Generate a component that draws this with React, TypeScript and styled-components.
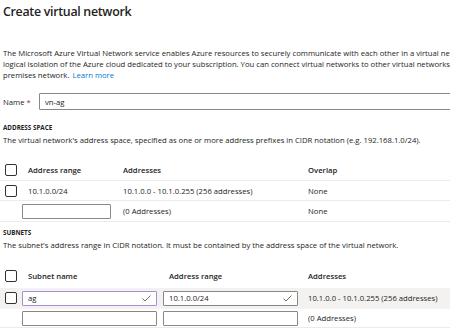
import React from 'react';
import styled, { createGlobalStyle } from 'styled-components';

const GlobalStyle = createGlobalStyle`
  html, body {
    margin: 0;
    padding: 0;
    overflow: hidden;
    background: #ffffff;
  }
  body {
    font-family: "Open Sans", "Liberation Sans", sans-serif;
    color: #252423;
  }
`;

const Page = styled.div`
  width: 620px;
  padding: 0 0 0 3px;
`;

const Title = styled.h1`
  margin: 0;
  padding-top: 2px;
  height: 35px;
  font-size: 12.4px;
  font-weight: 600;
  line-height: 20px;
  letter-spacing: -0.3px;
`;

const Description = styled.p`
  margin: 0;
  padding-top: 11px;
  font-size: 7.7px;
  line-height: 11px;
  white-space: nowrap;
`;

const Link = styled.a`
  color: #0078d4;
  text-decoration: none;
  margin-left: 3px;
`;

const FieldRow = styled.div`
  display: flex;
  align-items: center;
  margin-top: 12px;
`;

const FieldLabel = styled.label`
  width: 36px;
  font-size: 7.7px;
`;

const Required = styled.span`
  color: #a4262c;
  margin-left: 2px;
`;

const TextBox = styled.div<{ $width: number; $active?: boolean }>`
  box-sizing: border-box;
  width: ${(p) => p.$width}px;
  height: 15px;
  border: 1px solid ${(p) => (p.$active ? '#a58fd1' : '#8a8886')};
  border-radius: 1px;
  background: #ffffff;
  display: flex;
  align-items: center;
  justify-content: space-between;
  padding: 0 5px;
  font-size: 7.7px;
`;

const NameBox = styled(TextBox)`
  height: 17px;
`;

const SectionTitle = styled.h2<{ $gap?: number }>`
  margin: ${(p) => p.$gap ?? 13}px 0 0;
  font-size: 6.3px;
  font-weight: 700;
  line-height: 10px;
`;

const SectionText = styled.p`
  margin: 2px 0 0;
  font-size: 7.7px;
  line-height: 11px;
  white-space: nowrap;
`;

const Table = styled.div<{ $cols: string }>`
  display: grid;
  grid-template-columns: ${(p) => p.$cols};
  margin: 13px 0 0 -3px;
`;

const Row = styled.div<{ $height: number; $shaded?: boolean; $line?: boolean }>`
  display: contents;
  & > * {
    height: ${(p) => p.$height}px;
    background: ${(p) => (p.$shaded ? '#f3f2f1' : 'transparent')};
    border-bottom: ${(p) => (p.$line ? '1px solid #edebe9' : '1px solid transparent')};
  }
`;

const Cell = styled.div<{ $head?: boolean; $pad?: number }>`
  display: flex;
  align-items: center;
  padding-left: ${(p) => p.$pad ?? 6}px;
  font-size: 7.7px;
  font-weight: ${(p) => (p.$head ? 600 : 400)};
  white-space: nowrap;
`;

const CheckCell = styled.div`
  display: flex;
  align-items: center;
  padding-left: 5px;
`;

const Checkbox = styled.span`
  box-sizing: border-box;
  width: 12px;
  height: 12px;
  border: 1px solid #323130;
  border-radius: 2px;
  background: #ffffff;
`;

const Check = () => (
  <svg width="9" height="7" viewBox="0 0 9 7">
    <polyline points="0.5,3.5 3,6 8.5,0.5" fill="none" stroke="#605e5c" strokeWidth="0.9" />
  </svg>
);

export default function App() {
  return (
    <Page>
      <GlobalStyle />
      <Title>Create virtual network</Title>
      <Description>
        The Microsoft Azure Virtual Network service enables Azure resources to securely communicate with each other in a virtual network which is a
        <br />
        logical isolation of the Azure cloud dedicated to your subscription. You can connect virtual networks to other virtual networks, or your on-
        <br />
        premises network.<Link href="#">Learn more</Link>
      </Description>

      <FieldRow>
        <FieldLabel>
          Name<Required>*</Required>
        </FieldLabel>
        <NameBox $width={520}>vn-ag</NameBox>
      </FieldRow>

      <SectionTitle>ADDRESS SPACE</SectionTitle>
      <SectionText>
        The virtual network's address space, specified as one or more address prefixes in CIDR notation (e.g. 192.168.1.0/24).
      </SectionText>

      <Table $cols="22px 95px 185px 320px">
        <Row $height={21} $line>
          <CheckCell><Checkbox /></CheckCell>
          <Cell $head>Address range</Cell>
          <Cell $head>Addresses</Cell>
          <Cell $head>Overlap</Cell>
        </Row>
        <Row $height={19} $line>
          <CheckCell><Checkbox /></CheckCell>
          <Cell>10.1.0.0/24</Cell>
          <Cell>10.1.0.0 - 10.1.0.255 (256 addresses)</Cell>
          <Cell>None</Cell>
        </Row>
        <Row $height={20} $line>
          <CheckCell />
          <Cell $pad={0}><TextBox $width={89} /></Cell>
          <Cell>(0 Addresses)</Cell>
          <Cell>None</Cell>
        </Row>
      </Table>

      <SectionTitle $gap={6}>SUBNETS</SectionTitle>
      <SectionText>
        The subnet's address range in CIDR notation. It must be contained by the address space of the virtual network.
      </SectionText>

      <Table $cols="22px 141px 139px 320px">
        <Row $height={23}>
          <CheckCell><Checkbox /></CheckCell>
          <Cell $head>Subnet name</Cell>
          <Cell $head>Address range</Cell>
          <Cell $head>Addresses</Cell>
        </Row>
        <Row $height={20} $shaded>
          <CheckCell><Checkbox /></CheckCell>
          <Cell $pad={0}>
            <TextBox $width={135} $active>
              ag
              <Check />
            </TextBox>
          </Cell>
          <Cell $pad={0}>
            <TextBox $width={135}>
              10.1.0.0/24
              <Check />
            </TextBox>
          </Cell>
          <Cell>10.1.0.0 - 10.1.0.255 (256 addresses)</Cell>
        </Row>
        <Row $height={18} $line>
          <CheckCell />
          <Cell $pad={0}><TextBox $width={135} /></Cell>
          <Cell $pad={0}><TextBox $width={135} /></Cell>
          <Cell>(0 Addresses)</Cell>
        </Row>
      </Table>
    </Page>
  );
}
